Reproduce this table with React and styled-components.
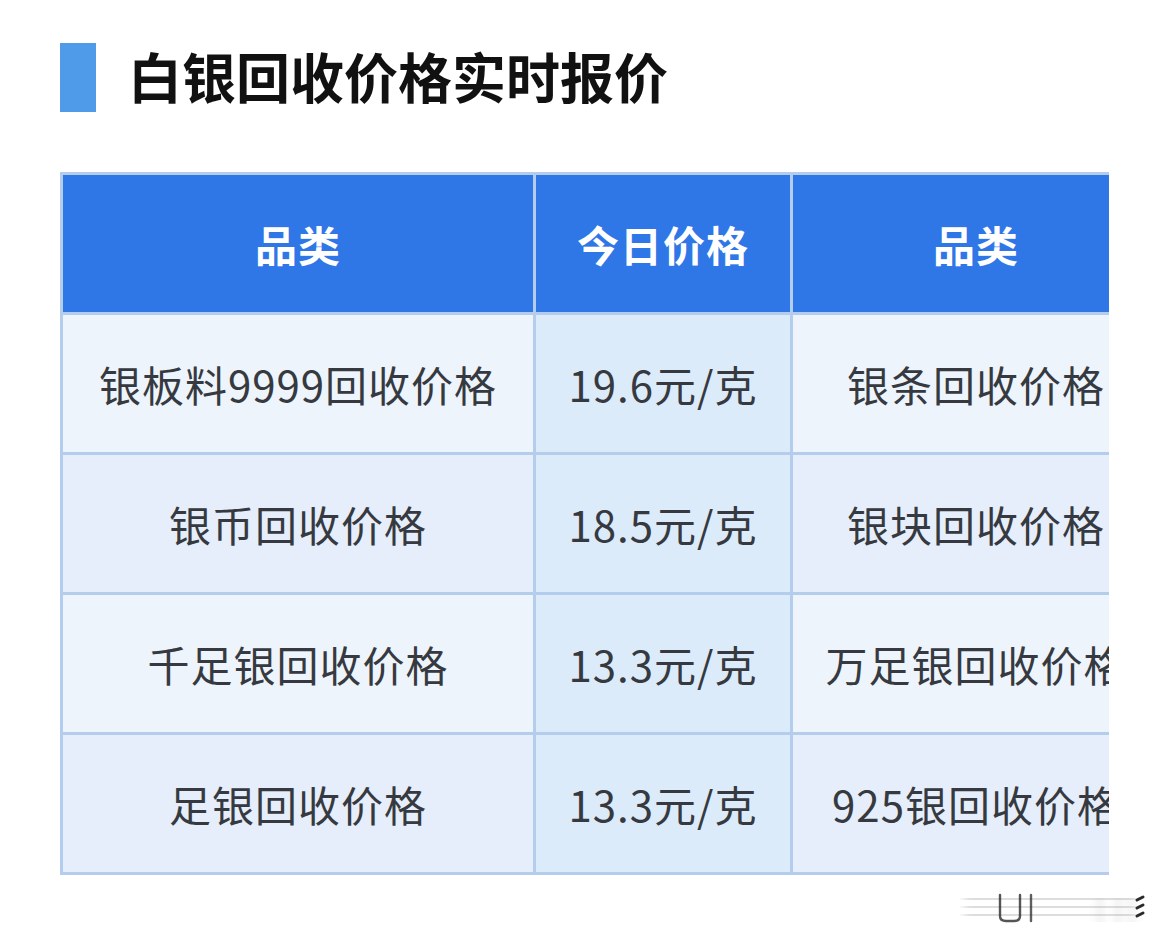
import React from "react";
import styled, { createGlobalStyle } from "styled-components";

const GlobalStyle = createGlobalStyle`
  html, body {
    margin: 0;
    padding: 0;
    background: #ffffff;
  }
  body {
    font-family: "Noto Sans CJK SC", "Noto Sans", sans-serif;
  }
`;

const rows = [
  { name: "银板料9999回收价格", price: "19.6元/克", other: "银条回收价格" },
  { name: "银币回收价格", price: "18.5元/克", other: "银块回收价格" },
  { name: "千足银回收价格", price: "13.3元/克", other: "万足银回收价格" },
  { name: "足银回收价格", price: "13.3元/克", other: "925银回收价格" },
];

// blurred site watermark in the bottom right corner
function Watermark() {
  return (
    <StyledMark width="186" height="36" viewBox="0 0 186 36">
      <defs>
        <filter id="blurx" x="-20%" y="-50%" width="140%" height="200%">
          <feGaussianBlur stdDeviation="4 0.6" />
        </filter>
      </defs>
      <g filter="url(#blurx)" stroke="#8f8f8f" strokeWidth="2" fill="none">
        <line x1="4" y1="9" x2="176" y2="9" opacity="0.3" />
        <line x1="4" y1="17" x2="176" y2="17" opacity="0.3" />
        <line x1="4" y1="25" x2="176" y2="25" opacity="0.3" />
        <line x1="140" y1="8" x2="140" y2="32" opacity="0.45" />
        <line x1="158" y1="8" x2="158" y2="32" opacity="0.45" />
        <line x1="172" y1="8" x2="172" y2="32" opacity="0.45" />
      </g>
      <g stroke="#2a2a2a" strokeWidth="2.4" fill="none" strokeLinecap="round">
        <path d="M40 5 V26 Q40 31 46 31 H54 Q60 31 60 26 V5" opacity="0.8" />
        <line x1="71" y1="5" x2="71" y2="31" opacity="0.75" />
        <path d="M177 10 l6 -3 M177 18 l6 -3 M177 26 l6 -3" strokeWidth="3" />
      </g>
    </StyledMark>
  );
}

function App() {
  return (
    <>
      <GlobalStyle />
      <StyledPage>
        <StyledTitleRow>
          <StyledBar />
          <StyledTitle>白银回收价格实时报价</StyledTitle>
        </StyledTitleRow>
        <StyledTableClip>
          <StyledGrid>
            <StyledHead>品类</StyledHead>
            <StyledHead>今日价格</StyledHead>
            <StyledHead>品类</StyledHead>
            {rows.map((row, i) => (
              <React.Fragment key={row.name}>
                <StyledCell $odd={i % 2 === 1}>{row.name}</StyledCell>
                <StyledCell $price>{row.price}</StyledCell>
                <StyledCell $odd={i % 2 === 1}>{row.other}</StyledCell>
              </React.Fragment>
            ))}
          </StyledGrid>
        </StyledTableClip>
        <Watermark />
      </StyledPage>
    </>
  );
}

const StyledPage = styled.div`
  position: relative;
  height: 949px;
  padding: 43px 0 0 60px;
  box-sizing: border-box;
  overflow: hidden;
`;

const StyledTitleRow = styled.div`
  display: flex;
  align-items: center;
  gap: 32px;
  height: 69px;
`;

const StyledBar = styled.div`
  width: 36px;
  height: 69px;
  background: #4f9be9;
`;

const StyledTitle = styled.h1`
  margin: 0 0 4px;
  font-size: 54px;
  font-weight: 700;
  color: #111111;
  line-height: 1;
`;

const StyledTableClip = styled.div`
  margin-top: 60px;
  width: 1049px;
  overflow: hidden;
`;

const StyledGrid = styled.div`
  display: grid;
  grid-template-columns: 470px 254px 366px;
  grid-auto-rows: 137px;
  gap: 3px;
  padding: 3px;
  width: max-content;
  background: #b4cdec;
`;

const StyledHead = styled.div`
  display: flex;
  align-items: center;
  justify-content: center;
  background: #2f76e6;
  color: #ffffff;
  font-size: 42px;
  font-weight: 700;
  letter-spacing: 1px;
`;

const StyledCell = styled.div`
  display: flex;
  align-items: center;
  justify-content: center;
  background: ${({ $price, $odd }) =>
    $price ? "#dcebfa" : $odd ? "#e5eefa" : "#edf4fc"};
  color: #363a40;
  font-size: 42px;
  font-weight: 400;
  letter-spacing: 1px;
  white-space: nowrap;
`;

const StyledMark = styled.svg`
  position: absolute;
  left: 960px;
  top: 890px;
`;

export default App;
